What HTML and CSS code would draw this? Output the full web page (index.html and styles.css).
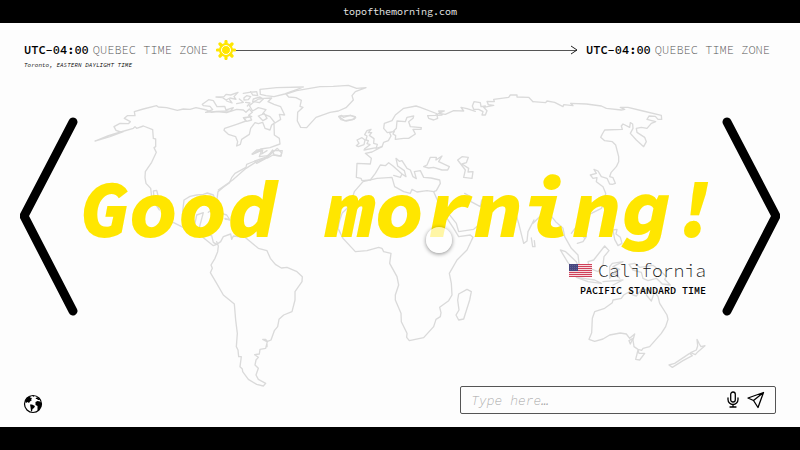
FILE: index.html
```html
<!DOCTYPE html>
<html lang="en">
<head>
<meta charset="utf-8">
<meta name="viewport" content="width=device-width, initial-scale=1">
<title>Top of the morning</title>
<link rel="stylesheet" href="styles.css">
</head>
<body>
<header class="site-bar">topofthemorning.com</header>
<main class="stage">
  <svg class="world" viewBox="0 69 2400 1212" aria-hidden="true">
    <!-- North America and Greenland -->
    <g transform="translate(270 225)">
      <path d="M100 170L60 185 15 198 55 182 92 171 130 160 135 155 140 160 160 153 188 164 190 190 197 192 197 215 192 218 199 232 185 262 166 290 165 308 168 325 182 340 185 365 195 385 208 405 192 365 190 348 200 346 205 365 225 400 245 440 275 455 315 475 330 480 355 500 370 512 380 508"/>
      <path d="M92 171L78 166 72 155 90 145 115 146 121 140 103 130 112 122 135 122 133 110 160 102 200 92 205 96 230 98 262 106 280 102 300 103 318 98 350 105 365 112 380 110 410 113 440 103 460 105 468 112 478 102 487 112 476 121 485 125 460 128 468 138 440 148 404 160 402 166 415 178 437 185 443 200 440 213 451 208 455 193 478 178 482 160 495 143 505 146 518 142 525 160 540 165 545 150 552 145 553 180 568 190 570 207 540 218 512 222 488 238 515 226 508 245 535 242 548 225 552 240 572 243 575 234 562 220 545 235 532 248 500 265 495 258 480 264 470 268 468 277 435 295 425 308 418 324 400 337 384 350 381 372 388 390 380 382 370 360 352 354 340 358 320 360 300 364 282 375 278 410 295 440 315 445 320 420 340 413 330 450 327 465 345 480 365 482 370 502 380 508"/>
      <path d="M337 88L356 74 370 77 381 95 404 94 408 105 430 98 422 108 380 109 347 112 368 104 360 94 340 92ZM378 66L402 65 408 58 422 60 444 52 432 65 438 73 420 69 408 75 398 68ZM410 78L426 84 419 74M462 68L470 62 482 65 475 74 462 75ZM460 55L478 52 500 50 503 62 488 60 482 50M490 72L510 66 520 72 508 83 488 79ZM467 82L480 84 472 93M448 72L460 82 440 86"/>
      <path d="M510 43L560 38 640 36 622 43 584 57 552 65 528 62 511 58ZM492 80L506 72 523 70 545 69 534 80 552 88 572 95 584 120 568 118 572 133 555 144 540 125 518 116 528 104 505 98 488 108 478 92ZM505 123L523 116 531 130 519 137ZM462 130L480 125 485 135 470 139ZM495 258L532 245"/>
      <path d="M588 57L620 47 690 35 730 34 775 31 800 40 828 38 796 50 786 62 790 75 768 98 745 108 720 112 678 127 650 158 632 157 622 138 623 112 639 97 630 94 634 76 618 68 596 66ZM746 124L782 121 797 128 788 134 764 137ZM355 412L368 402M395 415L410 420 420 435 405 430"/>
    </g>
    <!-- South America -->
    <g transform="translate(0 450)">
      <path d="M650 275L655 288 653 305 645 325 633 345 637 355 631 368 650 400 670 435 703 462 707 510 712 550 709 590 714 600 716 620 724 620 720 650 727 657 728 665 745 688 770 703 790 708 797 700 775 688 768 675 775 655 765 645 768 630 775 622 764 614 778 612 780 598 797 595 802 575 797 568 788 568 801 575 813 570 823 542 833 530 837 508 851 495 876 485 885 450 885 425 906 395 907 380 891 365 861 352 844 354 826 343 811 325 801 302 775 295 735 262 700 258 695 268 692 252 670 260 662 275 650 283M676 208L688 209M801 583L801 590M756 12L770 0 788 0 785 12 801 2M801 22L765 38 738 55 698 90 655 120"/>
    </g>
    <!-- Africa, Mediterranean and the Near East -->
    <g transform="translate(801 450)">
      <path d="M0 18L20 2 46 2 42 18 18 15 2 24M288 95L262 125 250 165 225 190 217 215 213 235 228 265 265 305 300 302 335 292 345 295 350 305 372 310 368 340 390 380 395 405 385 435 385 450 402 490 403 515 420 550 419 562 427 572 470 563 500 530 507 508 520 500 522 488 518 472 545 452 555 435 553 400 547 370 570 330 600 300 618 262 610 255 575 260 560 235 540 205 520 170 500 125 480 122 450 126 435 118 430 130 410 125 383 110 375 82 330 85Z"/>
      <path d="M310 90L325 70 340 45 355 47 365 38 378 48 405 72 400 82 380 76M405 72L417 80 412 62 392 48 387 25 397 34 405 32 420 55 430 60 438 80 448 86 442 65 460 62 470 82 492 84 518 90 520 100 508 122 500 125M310 90L285 92 282 85 268 82 270 40 310 42 313 25 295 10 315 6 345 -10M470 50L480 45 490 22 508 22 507 30 525 18 515 35 547 50 542 60 525 60 500 52 485 54ZM572 30L585 20 604 22 598 38 585 42 605 55 603 66 618 65 615 85 590 82 595 60ZM540 185L568 220 575 245 620 238 660 205M593 130L610 140 612 155 640 170 644 150M740 170L755 220 770 280 780 273 783 245 801 210M793 264L797 290 804 290 802 272M572 450L575 432 600 418 613 425 608 450 590 507 575 510 567 495 576 480 572 450"/>
    </g>
    <!-- Northern Europe -->
    <g transform="translate(801 0)">
      <path d="M798 305L785 292 750 291 750 285 730 285 725 292 680 298 682 305 660 304 664 314 680 316 650 322 660 332 655 345 645 345 648 335 635 328 620 328 616 318 621 305 640 308 642 320 655 318M625 334L600 326 582 322 590 333 560 332 535 343 515 340 532 333 515 333 525 345 510 346 512 355 500 360 485 355 482 347 505 346 512 342 460 322 447 318 410 325 385 345 375 362 352 370 350 385 361 398 378 395 388 385 390 363 415 365 420 352 440 348 438 355 425 365 430 380 463 383 462 388 438 388 445 402 425 415 410 415 385 418 386 407 378 402 382 394 368 398 372 408 364 422 350 427 345 440 327 445M291 450L328 443 331 433 320 430 321 416 307 406 314 398 304 398 312 388 300 392 293 404 300 408 297 420 304 422 300 431 309 434 293 446M268 437L276 430 270 420 285 413 294 420 291 434 274 440ZM215 350L224 346 229 352 250 346 265 350 262 357 238 363 222 359Z"/>
    </g>
    <!-- Siberia and East Asia -->
    <g transform="translate(1599 0)">
      <path d="M0 305L38 308 42 303 65 307 90 320 92 314 120 317 113 310 160 312 205 318 220 325 265 330 275 328 262 322 285 322 330 333 385 346 386 358 375 358 367 349 348 348 342 358 368 365 355 370 342 385 325 382 310 385 312 397 335 412 340 425 332 440 310 420 292 400 300 385 299 372 292 368 290 382 270 372 265 378 268 388 215 390 208 402 203 412 215 422 238 425 248 435 257 470 257 485 250 500 234 518 230 530 240 533 247 550 238 553 230 552 222 535 205 530 195 513 183 508 190 520 172 525 180 535 192 533 190 545 210 560 218 580 213 610 205 625 175 640 155 650 140 665 155 690 160 710 150 725 133 730M0 670L20 650 48 640 68 665 90 685 95 710 115 745 135 765 138 790M115 700L130 680 142 700 155 715"/>
    </g>
    <!-- South-East Asia and Oceania -->
    <g transform="translate(1599 450)">
      <path d="M82 300L98 305 130 335 141 370 125 360 105 338ZM130 382L185 390 205 400 165 395ZM165 335L182 330 215 288 228 302 213 320 210 345 195 365 170 355ZM230 350L238 340 270 335 240 350 260 358 245 364 260 385 240 370 230 385ZM288 343L305 340 320 352 360 346 385 365 400 380 395 388 412 405 388 402 370 385 345 392 330 385 325 367 300 360ZM240 240L252 238 249 252 262 262 267 280 255 287 245 268ZM210 395L270 390 240 405"/>
      <path d="M240 450L265 445 272 435 290 425 300 435 310 438 325 418 345 420 340 435 355 453 365 425 375 440 380 460 402 495 405 508 398 530 385 550 350 590 330 595 326 601 315 598 303 590 300 570 305 552 290 565 280 552 262 549 230 555 210 567 185 574 168 568 176 548 178 505 185 485 215 475 238 458ZM288 572L300 565 292 582ZM315 600L318 610 335 610 320 630 308 628ZM492 568L499 582 504 590 516 587 495 605 487 614 473 608 490 600 494 588ZM408 645L425 640 470 610 478 617 450 632 418 652Z"/>
    </g>
  </svg>

  <section class="route" aria-label="Time zones">
    <div class="zone">
      <p class="zone-name"><strong>UTC-04:00</strong><span>QUEBEC TIME ZONE</span></p>
      <p class="zone-detail">Toronto, EASTERN DAYLIGHT TIME</p>
    </div>
    <div class="track" aria-hidden="true">
      <svg class="sun" viewBox="-10 -10 20 20">
        <path d="M0-8.500V8.500M-8.500 0H8.500M-6-6L6 6M6-6L-6 6" stroke="#ffe600" stroke-width="3.200" stroke-linecap="round"/>
        <circle r="7" fill="#ffe600"/>
        <circle r="4.500" fill="none" stroke="#fff" stroke-width="1"/>
      </svg>
      <span class="line"></span>
      <svg class="tip" viewBox="0 0 8 10"><path d="M1 1L7 5 1 9"/></svg>
    </div>
    <div class="zone">
      <p class="zone-name"><strong>UTC-04:00</strong><span>QUEBEC TIME ZONE</span></p>
    </div>
  </section>

  <section class="hero">
    <button class="step" type="button" aria-label="Previous">
      <svg viewBox="0 0 60 200"><path d="M54 6L5 100 54 195"/></svg>
    </button>
    <div class="greeting">
      <h1>Good morning!</h1>
      <div class="place">
        <svg class="flag" viewBox="0 0 23 13" role="img" aria-label="United States flag">
          <path fill="#f6dce0" d="M0 0H23V13H0z"/>
          <path d="M0 .5H23M0 2.500H23M0 4.500H23M0 6.500H23M0 8.500H23M0 10.500H23M0 12.500H23" stroke="#cf4059"/>
          <path fill="#46467f" d="M0 0H9V7H0z"/>
          <path d="M1 1.500H8M1 3.500H8M1 5.500H8" stroke="#7777a2" stroke-dasharray="1 1" stroke-width=".5"/>
        </svg>
        <span>California</span>
      </div>
      <p class="place-zone">PACIFIC STANDARD TIME</p>
    </div>
    <button class="step" type="button" aria-label="Next">
      <svg viewBox="0 0 60 200"><path d="M6 6L55 100 6 195"/></svg>
    </button>
    <span class="pointer" aria-hidden="true"></span>
  </section>

  <footer class="tools">
    <button class="icon-button" type="button" aria-label="World">
      <svg class="globe" viewBox="0 0 20 20">
        <circle cx="10" cy="10" r="8.500" fill="#fff" stroke="#000" stroke-width="1.200"/>
        <path d="M2 7L5 3 8 2 7 3.500 9 4 8 5.500 9 6 7 7.500 6 9 4.500 8 3 9zM7 10.500L9 10.500 12 12 11 14 9.500 15 9 17.500 8 17 7.500 13zM12.500 8L14.500 7 17 7.500 18.500 9 18 13 16 16 14.500 16.500 14.500 12 12.500 11zM12.500 5L13.500 3.500 15 3.500 17 6 15 6 14 5zM9.500 2L11 2 10.500 3z"/>
      </svg>
    </button>
    <form class="composer">
      <input type="text" aria-label="Message" placeholder="Type here…">
      <button class="icon-button" type="button" aria-label="Dictate">
        <svg class="mic" viewBox="0 0 12 18"><rect x="3.700" y="1" width="4.600" height="10" rx="2.300"/><path d="M1 7V8.500A5 5 0 0 0 11 8.500V7M6 13.500V16M3 16H9"/></svg>
      </button>
      <button class="icon-button" type="submit" aria-label="Send">
        <svg class="send" viewBox="0 0 18 18"><path d="M16.500 1.500L1 7 6.500 9.500 11 16.500zM16.500 1.500L6.500 9.500"/></svg>
      </button>
    </form>
  </footer>
</main>
<div class="bottom-bar"></div>
</body>
</html>
```
FILE: styles.css
```css
* {
  box-sizing: border-box;
}

body {
  margin: 0;
  min-height: 100vh;
  display: grid;
  grid-template-rows: 23px 1fr 23px;
  background: #fdfdfd;
  color: #000;
  font-family: "Source Code Pro", "Liberation Mono", monospace;
}

p,
h1 {
  margin: 0;
}

button {
  padding: 0;
  border: 0;
  background: none;
  color: inherit;
  cursor: pointer;
}

svg {
  display: block;
  fill: none;
}

.site-bar {
  display: flex;
  align-items: center;
  justify-content: center;
  background: #000;
  color: #e6e6e6;
  font-size: 10px;
}

.bottom-bar {
  background: #000;
}

.stage {
  position: relative;
  display: flex;
  flex-direction: column;
  padding: 19px 24px 13px;
}

.world {
  position: absolute;
  inset: 0;
  width: 100%;
  height: 100%;
  stroke: #dadada;
  stroke-width: 4;
  stroke-linejoin: round;
  stroke-linecap: round;
}

.route {
  position: relative;
  display: flex;
  align-items: flex-start;
  gap: 8px;
  height: 32px;
  padding-right: 6px;
}

.zone-name {
  display: flex;
  gap: 4px;
  font-size: 12px;
  line-height: 16px;
  white-space: nowrap;
}

.zone-name strong {
  font-weight: 600;
}

.zone-name span {
  color: #555;
  font-weight: 300;
}

.zone-detail {
  font-size: 6px;
  font-style: italic;
  line-height: 14px;
}

.track {
  display: flex;
  flex: 1;
  align-items: center;
  height: 16px;
}

.sun {
  width: 20px;
  height: 20px;
}

.line {
  flex: 1;
  height: 1px;
  margin-right: -7px;
  background: #555;
}

.tip {
  width: 8px;
  height: 10px;
  stroke: #222;
}

.hero {
  position: relative;
  flex: 1;
  display: flex;
  align-items: center;
  justify-content: space-between;
  margin: 0 -5px;
  padding-bottom: 28px;
}

.step svg {
  width: 60px;
  height: 200px;
  stroke: #000;
  stroke-width: 9;
  stroke-linecap: round;
  stroke-linejoin: bevel;
}

.greeting {
  flex: 1;
  display: flex;
  flex-direction: column;
  align-items: flex-end;
  padding-top: 34px;
  padding-right: 15px;
}

.greeting h1 {
  margin-right: -14px;
  color: #ffe600;
  font-size: 82px;
  font-style: italic;
  font-weight: 900;
  line-height: 84px;
  white-space: nowrap;
}

.place {
  display: flex;
  align-items: center;
  gap: 6px;
  margin-top: 11px;
  color: #111;
  font-size: 18px;
  font-weight: 300;
  line-height: 20px;
}

.flag {
  width: 23px;
  height: 13px;
}

.place-zone {
  font-size: 10px;
  font-weight: 600;
  line-height: 20px;
}

.pointer {
  position: absolute;
  top: 49%;
  left: calc(50% + 26px);
  width: 26px;
  height: 26px;
  border-radius: 50%;
  background: rgb(255 255 255 / 65%);
  box-shadow: 0 1px 4px rgb(0 0 0 / 45%);
}

.tools {
  position: relative;
  display: flex;
  align-items: center;
  justify-content: space-between;
}

.globe {
  width: 20px;
  height: 20px;
  margin: 8px 0 0 -1px;
  fill: #000;
}

.composer {
  display: flex;
  align-items: center;
  gap: 8px;
  width: 42%;
  height: 28px;
  padding: 0 10px;
  border: 1px solid #555;
  border-radius: 2px;
  background: #fdfdfd;
}

.composer input {
  flex: 1;
  min-width: 0;
  padding: 0;
  border: 0;
  outline: 0;
  background: none;
  font-family: inherit;
  font-size: 13px;
  font-style: italic;
  font-weight: 300;
}

.composer input::placeholder {
  color: #a5a5a5;
}

.mic {
  width: 12px;
  height: 18px;
  stroke: #000;
  stroke-width: 1.3;
  stroke-linecap: round;
}

.send {
  width: 18px;
  height: 18px;
  stroke: #000;
  stroke-width: 1.3;
  stroke-linejoin: round;
}
```
